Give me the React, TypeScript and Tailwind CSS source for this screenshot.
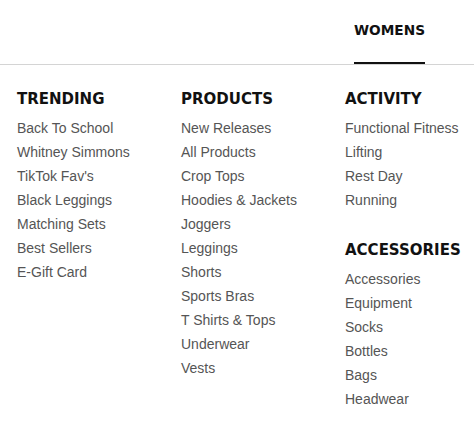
const columns: { title: string; links: string[] }[][] = [
  [
    {
      title: 'TRENDING',
      links: [
        'Back To School',
        'Whitney Simmons',
        "TikTok Fav's",
        'Black Leggings',
        'Matching Sets',
        'Best Sellers',
        'E-Gift Card',
      ],
    },
  ],
  [
    {
      title: 'PRODUCTS',
      links: [
        'New Releases',
        'All Products',
        'Crop Tops',
        'Hoodies & Jackets',
        'Joggers',
        'Leggings',
        'Shorts',
        'Sports Bras',
        'T Shirts & Tops',
        'Underwear',
        'Vests',
      ],
    },
  ],
  [
    {
      title: 'ACTIVITY',
      links: ['Functional Fitness', 'Lifting', 'Rest Day', 'Running'],
    },
    {
      title: 'ACCESSORIES',
      links: ['Accessories', 'Equipment', 'Socks', 'Bottles', 'Bags', 'Headwear'],
    },
  ],
];

const headingFont = { fontFamily: '"DejaVu Sans", sans-serif' };

function Section({ title, links }: { title: string; links: string[] }) {
  return (
    <div className="flex flex-col gap-[7px]">
      <h3
        className="text-[15px] leading-5 font-bold text-[#111] whitespace-nowrap"
        style={headingFont}
      >
        {title}
      </h3>
      <ul className="flex flex-col">
        {links.map((l) => (
          <li key={l} className="text-[14px] leading-6 text-[#555] whitespace-nowrap">
            {l}
          </li>
        ))}
      </ul>
    </div>
  );
}

export default function App() {
  return (
    <div
      className="w-[474px] h-[427px] bg-white overflow-hidden"
      style={{ fontFamily: '"Liberation Sans", Arial, sans-serif' }}
    >
      <header className="flex justify-end h-[65px] border-b border-[#d4d4d4]">
        <div className="h-full mr-[49px] pt-[20px] border-b-2 border-[#111] w-[71px]">
          <span
            className="block text-[13.7px] leading-5 font-bold text-[#111]"
            style={headingFont}
          >
            WOMENS
          </span>
        </div>
      </header>
      <div className="grid grid-cols-[164px_164px_1fr] pl-[17px] pt-[24px]">
        {columns.map((col, i) => (
          <div key={i} className="flex flex-col gap-[28px]">
            {col.map((s) => (
              <Section key={s.title} {...s} />
            ))}
          </div>
        ))}
      </div>
    </div>
  );
}
